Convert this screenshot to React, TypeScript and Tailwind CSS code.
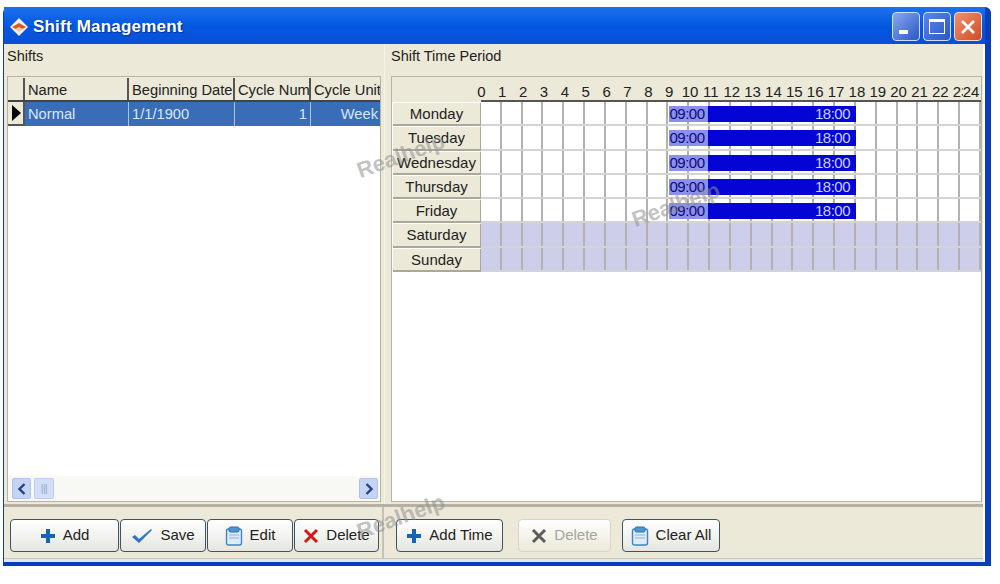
const hours = Array.from({ length: 24 }, (_, i) => i)
const days = [
  { name: 'Monday', bar: true },
  { name: 'Tuesday', bar: true },
  { name: 'Wednesday', bar: true },
  { name: 'Thursday', bar: true },
  { name: 'Friday', bar: true },
  { name: 'Saturday', bar: false },
  { name: 'Sunday', bar: false },
]

function PlusIcon() {
  return (
    <svg width="16" height="16" viewBox="0 0 16 16">
      <path d="M6 1h4v5h5v4h-5v5H6v-5H1V6h5z" fill="#1565b5" />
    </svg>
  )
}

function CheckIcon() {
  return (
    <svg width="22" height="16" viewBox="0 0 22 16">
      <path d="M1 9l3-2 4 4L20 1l1 1L8 15z" fill="#2f74c8" />
    </svg>
  )
}

function ClipIcon() {
  return (
    <svg width="18" height="20" viewBox="0 0 18 20">
      <rect x="1.5" y="3" width="15" height="16" rx="2" fill="#dcebf8" stroke="#3d86c6" strokeWidth="1.4" />
      <rect x="4" y="1" width="10" height="5" rx="1.5" fill="#4b97d6" stroke="#2f6ea8" />
      <path d="M4 9h10M4 12h10" stroke="#8fb4d6" />
    </svg>
  )
}

function CrossIcon({ color }: { color: string }) {
  return (
    <svg width="16" height="16" viewBox="0 0 16 16">
      <path d="M2 2l12 12M14 2L2 14" stroke={color} strokeWidth="3" />
    </svg>
  )
}

function ScrollButton({ path }: { path: string }) {
  return (
    <div className="w-[19px] h-[21px] rounded-[2px] bg-[#c5d4f4] border border-[#b0c4ea] flex items-center justify-center">
      <svg width="10" height="12" viewBox="0 0 10 12">
        <path d={path} fill="none" stroke="#24408a" strokeWidth="2.4" />
      </svg>
    </div>
  )
}

function ToolButton({ icon, label, width, disabled }: { icon: React.ReactNode; label: string; width: string; disabled?: boolean }) {
  return (
    <button
      className={`${width} h-[33px] flex items-center justify-center gap-[7px] rounded-[4px] border-[1.5px] bg-gradient-to-b from-white to-[#e6e6e0] text-[15px] ${
        disabled ? 'border-[#d8d5c6] text-[#a5a5a0] from-[#f0eee4] to-[#ece9d8]' : 'border-[#3c5468] text-[#222]'
      }`}
    >
      {icon}
      <span>{label}</span>
    </button>
  )
}

function Watermark({ className }: { className: string }) {
  return (
    <div className={`absolute -rotate-[20deg] text-[22px] font-bold text-[#8f8f8f]/55 pointer-events-none ${className}`}>
      Realhelp
    </div>
  )
}

export default function App() {
  return (
    <div className="relative w-[1000px] h-[584px] bg-white pt-[7px] pl-[3px] overflow-hidden font-['Liberation_Sans',sans-serif] text-[#222]">
      <div className="w-[988px] h-[559px] flex flex-col border-l border-r-[6px] border-b-[4px] border-[#0a3dba] rounded-t-[6px]">
        {/* title bar */}
        <div className="h-[37px] shrink-0 flex items-center pl-[4px] pr-[2px] bg-gradient-to-b from-[#1d71ee] via-[#0458e2] to-[#0a4fd6]">
          <svg width="22" height="22" viewBox="0 0 22 22" className="mt-[2px]">
            <path d="M11 2l9 9-9 9-9-9z" fill="#f4efe6" />
            <path d="M4 11l7-4 7 4-7 4z" fill="#d9582a" />
            <path d="M7 13l4-2 4 2-4 3z" fill="#f4c9a0" />
          </svg>
          <span className="ml-[3px] mt-[3px] text-[17px] font-bold text-white tracking-[0.2px] [text-shadow:1px_1px_1px_#0a2f88]">Shift Management</span>
          <div className="ml-auto flex gap-[3px] mr-[1px] mt-[2px]">
            <div className="w-[28px] h-[29px] rounded-[4px] border border-[#cfe0ff] bg-gradient-to-br from-[#8aa8ee] to-[#2d55c8] flex items-end pl-[6px] pb-[6px]">
              <div className="w-[9px] h-[4px] bg-white" />
            </div>
            <div className="w-[28px] h-[29px] rounded-[4px] border border-[#cfe0ff] bg-gradient-to-br from-[#5c86ea] to-[#2d55c8] flex items-center justify-center">
              <div className="w-[16px] h-[15px] border border-white border-t-[3px]" />
            </div>
            <div className="w-[28px] h-[29px] rounded-[4px] border border-[#f0d8d0] bg-gradient-to-br from-[#ee9070] to-[#d04a20] flex items-center justify-center">
              <svg width="16" height="16" viewBox="0 0 16 16">
                <path d="M2 2l12 12M14 2L2 14" stroke="#fff" strokeWidth="2.6" />
              </svg>
            </div>
          </div>
        </div>

        <div className="flex-1 flex flex-col bg-[#ece9d8] border-r-2 border-b-[3px] border-r-white border-b-[#dfe8f4]">
          {/* panels */}
          <div className="h-[463px] flex shrink-0 border-b-[3px] border-[#b5b0a2]">
            <div className="w-[377px] shrink-0 pl-[3px] flex flex-col">
              <div className="h-[32px] pt-[3px] text-[14.5px] leading-[18px]">Shifts</div>
              <div className="flex-1 flex flex-col bg-white border border-[#b8b4a4] mb-[2px]">
                <div className="h-[25px] flex bg-[#ece9d8] pt-px border-b-[2px] border-[#444] text-[14.7px]">
                  <div className="w-[17px] border-r-[2px] border-[#555]" />
                  <div className="w-[104px] pl-[3px] leading-[25px] border-r-[2px] border-[#555]">Name</div>
                  <div className="w-[106px] pl-[3px] leading-[25px] border-r-[2px] border-[#555] whitespace-nowrap overflow-hidden">Beginning Date</div>
                  <div className="w-[76px] pl-[3px] leading-[25px] border-r-[2px] border-[#555] whitespace-nowrap overflow-hidden">Cycle Num</div>
                  <div className="flex-1 pl-[3px] leading-[25px] whitespace-nowrap overflow-hidden">Cycle Unit</div>
                </div>
                <div className="h-[24px] flex text-[14.7px] leading-[25px]">
                  <div className="w-[17px] shrink-0 bg-[#ece9d8] border-r-[2px] border-b-[2px] border-[#555] flex items-center pl-[4px]">
                    <div className="w-0 h-0 border-y-[8px] border-y-transparent border-l-[9px] border-l-black" />
                  </div>
                  <div className="flex-1 flex bg-[#3a6db8] text-[#d8e6fb]">
                    <div className="w-[104px] pl-[3px] border-r border-[#a8c4e8]">Normal</div>
                    <div className="w-[106px] pl-[3px] border-r border-[#a8c4e8]">1/1/1900</div>
                    <div className="w-[76px] pr-[3px] text-right border-r border-[#a8c4e8]">1</div>
                    <div className="flex-1 pr-[2px] text-right">Week</div>
                  </div>
                </div>
                <div className="flex-1" />
                <div className="h-[25px] flex items-center justify-between pl-[4px] pr-[2px] bg-[#f8f8f5]">
                  <div className="flex gap-[3px]">
                    <ScrollButton path="M7.5 1L2.5 6l5 5" />
                    <div className="w-[20px] h-[21px] rounded-[2px] bg-[#d3dff6] border border-[#bccdf0] flex items-center justify-center text-[#8fa5d0] text-[10px] tracking-[-0.5px] leading-none">|||</div>
                  </div>
                  <ScrollButton path="M2.5 1l5 5-5 5" />
                </div>
              </div>
            </div>

            <div className="flex-1 pl-[6px] flex flex-col border-l border-[#f5f3e8] ml-[3px] pr-[1px]">
              <div className="h-[32px] pt-[3px] text-[14.5px] leading-[18px]">Shift Time Period</div>
              <div className="flex-1 flex flex-col bg-white border border-[#b8b4a4] mb-[2px] overflow-hidden">
                <div className="h-[25px] shrink-0 flex bg-[#ece9d8] text-[15px]">
                  <div className="w-[89px] shrink-0" />
                  <div className="flex-1 relative border-b-[2px] border-[#555]">
                    <div className="flex -ml-[10px] leading-[29px]">
                      {hours.map((h) => (
                        <div key={h} className="w-[20.87px] shrink-0 text-center whitespace-nowrap">{h}</div>
                      ))}
                      <div className="-ml-[9px] pr-[1px] bg-[#ece9d8] h-[23px] relative">24</div>
                    </div>
                  </div>
                </div>
                {days.map((d) => (
                  <div key={d.name} className="h-[24.3px] shrink-0 flex">
                    <div className="w-[89px] shrink-0 ml-px bg-[#ece9d8] border-r-[2px] border-b-[2px] border-[#aca899] border-t border-t-white text-center text-[15px] leading-[22px]">
                      {d.name}
                    </div>
                    <div className={`flex-1 relative flex -ml-px border-b-[2px] border-[#d4d4d4] ${d.bar ? 'bg-white' : 'bg-[#ccceea]'}`}>
                      {hours.map((h) => (
                        <div key={h} className="flex-1 border-r-2 border-[#b2b2b2]" />
                      ))}
                      {d.bar && (
                        <div className="absolute left-[37.5%] w-[37.5%] top-[4px] h-[16px] bg-[#0404d4] flex justify-between text-[15px] leading-[16px] tracking-[-0.5px]">
                          <span className="h-full w-[39px] pl-px bg-[#8d90ea] text-[#0a0a80]">09:00</span>
                          <span className="pr-[6px] text-[#c8d4ff]">18:00</span>
                        </div>
                      )}
                    </div>
                  </div>
                ))}
              </div>
            </div>
          </div>

          {/* toolbars */}
          <div className="flex-1 flex border-b border-[#c8c5b4]">
            <div className="w-[380px] shrink-0 pl-[6px] pt-[12px] flex gap-px border-r-2 border-[#c5c2b2]">
              <ToolButton icon={<PlusIcon />} label="Add" width="w-[109px]" />
              <ToolButton icon={<CheckIcon />} label="Save" width="w-[86px]" />
              <ToolButton icon={<ClipIcon />} label="Edit" width="w-[86px]" />
              <ToolButton icon={<CrossIcon color="#d81818" />} label="Delete" width="w-[85px]" />
            </div>
            <div className="flex-1 pl-[12px] pt-[12px] flex">
              <ToolButton icon={<PlusIcon />} label="Add Time" width="w-[107px]" />
              <div className="ml-[15px]">
                <ToolButton icon={<CrossIcon color="#5c5c5c" />} label="Delete" width="w-[93px]" disabled />
              </div>
              <div className="ml-[11px]">
                <ToolButton icon={<ClipIcon />} label="Clear All" width="w-[98px]" />
              </div>
            </div>
          </div>
        </div>
      </div>

      <Watermark className="left-[355px] top-[139px]" />
      <Watermark className="left-[630px] top-[188px]" />
      <Watermark className="left-[355px] top-[500px]" />
    </div>
  )
}
